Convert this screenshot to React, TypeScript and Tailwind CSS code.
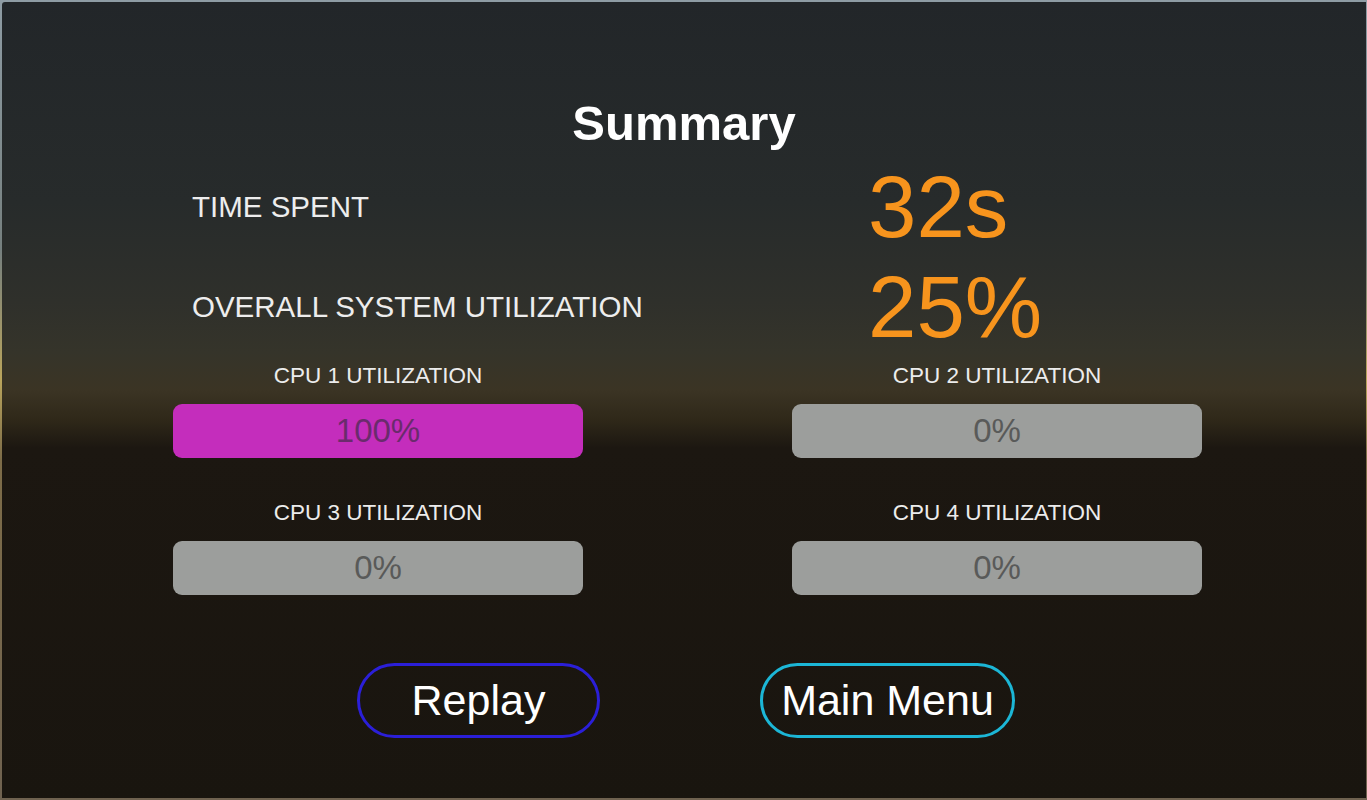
import React from 'react';

type Cpu = {
	id: number;
	value: number;
};

const cpus: Cpu[] = [
	{ id: 1, value: 100 },
	{ id: 2, value: 0 },
	{ id: 3, value: 0 },
	{ id: 4, value: 0 },
];

// one CPU cell: label over a pill-shaped bar
const CpuBar: React.FC<{ cpu: Cpu }> = ({ cpu }) => {
	const active = cpu.value > 0;
	return (
		<div className="flex flex-col items-center">
			<div className="text-[22.5px] leading-[24px] text-[#ececec]">
				CPU {cpu.id} UTILIZATION
			</div>
			<div
				className={`mt-[16px] flex h-[54px] w-full items-center justify-center rounded-[9px] text-[33px] ${
					active
						? 'bg-[#c42dbc] text-[#6a2b6c]'
						: 'bg-[#9c9e9c] text-[#595a59]'
				}`}
			>
				{cpu.value}%
			</div>
		</div>
	);
};

const StatRow: React.FC<{ label: string; value: string }> = ({
	label,
	value,
}) => (
	<div className="flex h-[100px] items-center pl-[190px]">
		<div className="w-[676px] text-[29.5px] leading-[34px] text-[#ededed]">
			{label}
		</div>
		<div className="text-[87px] leading-[88px] text-[#f7941d]">
			{value}
		</div>
	</div>
);

export default function App() {
	return (
		<div
			className="h-[800px] w-full bg-[linear-gradient(to_bottom,#8e9ca4_0px,#76807f_250px,#b9a45c_380px,#7d6c48_460px,#6f6250_800px)] pt-[2px] pb-[2px] pl-[2px] pr-[1px]"
			style={{ fontFamily: '"Liberation Sans", Arial, sans-serif' }}
		>
			<div className="flex h-full flex-col rounded-tl-[3px] bg-[linear-gradient(to_bottom,#222629_0px,#272b2b_200px,#2f302b_300px,#35342a_350px,#3b3424_388px,#2f2819_418px,#1c1711_446px,#19150f_800px)]">
				{/* Title */}
				<h1 className="mt-[93px] text-center text-[49px] font-bold leading-[56px] text-white">
					Summary
				</h1>

				{/* Headline stats */}
				<div className="mt-[6px]">
					<StatRow label="TIME SPENT" value="32s" />
					<StatRow label="OVERALL SYSTEM UTILIZATION" value="25%" />
				</div>

				{/* Per-CPU bars */}
				<div className="mt-[7px] grid grid-cols-[410px_410px] gap-x-[209px] gap-y-[43px] pl-[171px]">
					{cpus.map((cpu) => (
						<CpuBar key={cpu.id} cpu={cpu} />
					))}
				</div>

				{/* Actions */}
				<div className="mt-[68px] flex justify-center gap-[160px] pl-[4px]">
					<button
						type="button"
						className="flex h-[75px] w-[243px] items-center justify-center rounded-full border-[3px] border-[#2b1fd8] text-[43px] text-white"
					>
						Replay
					</button>
					<button
						type="button"
						className="flex h-[75px] w-[255px] items-center justify-center rounded-full border-[3px] border-[#1cb6d6] text-[43px] text-white"
					>
						Main Menu
					</button>
				</div>
			</div>
		</div>
	);
}
